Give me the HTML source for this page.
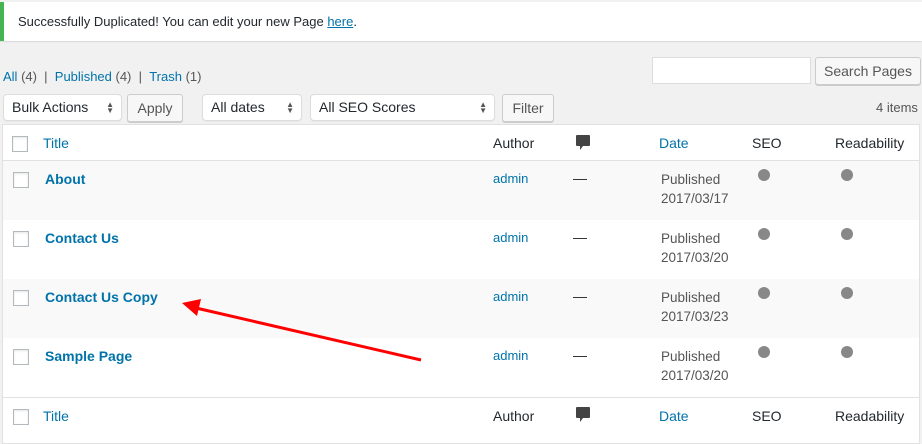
<!DOCTYPE html>
<html><head><meta charset="utf-8"><style>
*{box-sizing:border-box;margin:0;padding:0}
body{width:922px;height:432px;overflow:hidden;background:#f1f1f1;font-family:"Liberation Sans",Arial,sans-serif;font-size:14px;color:#23282d;position:relative}
.a{position:absolute;white-space:nowrap}
a,.l{color:#0073aa;text-decoration:none}
.notice{position:absolute;left:0;top:2px;width:922px;height:39px;background:#fff;border-left:4px solid #46b450;box-shadow:0 1px 1px rgba(0,0,0,.1)}
.sel{position:absolute;height:27px;background:#fff;border:1px solid #ddd;border-radius:4px;padding:4px 0 0 8px;font-size:14px;box-shadow:0 1px 1px rgba(0,0,0,.04)}
.btn{position:absolute;height:28px;background:#f7f7f7;border:1px solid #ccc;border-radius:3px;box-shadow:0 1px 0 #ccc;padding:5px 0 0;text-align:center;color:#555;font-size:14px}
.arr{position:absolute;right:7px;top:7px;font-size:8px;line-height:6px;color:#555}
.tbl{position:absolute;left:2px;top:124px;width:918px;height:320px;background:#fff;border:1px solid #e1e1e1}
.row{position:absolute;left:0;width:916px;height:59px}
.cb{position:absolute;width:16px;height:16px;border:1px solid #b4b9be;background:#fff;box-shadow:inset 0 1px 2px rgba(0,0,0,.1)}
.dot{position:absolute;width:12px;height:12px;border-radius:50%;background:#888}
.pub{font-size:13.5px;line-height:19px;color:#555}
b{font-weight:bold}
</style></head><body>
<div class="notice"></div>
<div class="a" style="left:18px;top:14px;font-size:13px">Successfully Duplicated! You can edit your new Page <a style="text-decoration:underline" href="#">here</a>.</div>

<div class="a" style="left:3px;top:69px;font-size:13px;color:#555"><span class="l">All</span> (4) &nbsp;| &nbsp;<span class="l">Published</span> (4) &nbsp;| &nbsp;<span class="l">Trash</span> (1)</div>

<div class="a" style="left:652px;top:57px;width:159px;height:27px;background:#fff;border:1px solid #ddd"></div>
<div class="btn" style="left:815px;top:57px;width:106px;padding-top:5px">Search Pages</div>

<div class="sel" style="left:3px;top:94px;width:119px">Bulk Actions<span class="arr">▲<br>▼</span></div>
<div class="btn" style="left:127px;top:94px;width:56px">Apply</div>
<div class="sel" style="left:202px;top:94px;width:100px">All dates<span class="arr">▲<br>▼</span></div>
<div class="sel" style="left:310px;top:94px;width:185px">All SEO Scores<span class="arr">▲<br>▼</span></div>
<div class="btn" style="left:502px;top:94px;width:52px">Filter</div>
<div class="a" style="left:876px;top:100px;font-size:13px;color:#555">4 items</div>

<div class="tbl">
 <div class="row" style="top:0;height:36px;border-bottom:1px solid #e1e1e1"></div>
 <div class="row" style="top:36px;background:#f9f9f9"></div>
 <div class="row" style="top:95px"></div>
 <div class="row" style="top:154px;background:#f9f9f9"></div>
 <div class="row" style="top:213px;border-bottom:1px solid #e1e1e1;height:60px"></div>
</div>

<!-- header -->
<div class="cb" style="left:12px;top:136px"></div>
<div class="a l" style="left:43px;top:135px">Title</div>
<div class="a" style="left:493px;top:135px">Author</div>
<svg class="a" style="left:576px;top:135px" width="14" height="16" viewBox="0 0 14 16"><path d="M1 0h12a1 1 0 0 1 1 1v9a1 1 0 0 1-1 1H7l-3 4v-4H1a1 1 0 0 1-1-1V1a1 1 0 0 1 1-1z" fill="#444"/></svg>
<div class="a l" style="left:659px;top:135px">Date</div>
<div class="a" style="left:752px;top:135px">SEO</div>
<div class="a" style="left:835px;top:135px">Readability</div>

<!-- rows -->
<div class="cb" style="left:13px;top:172px"></div>
<div class="a l" style="left:45px;top:171px"><b>About</b></div>
<div class="a l" style="left:493px;top:171px;font-size:13px">admin</div>
<div class="a" style="left:573px;top:170px">—</div>
<div class="a pub" style="left:661px;top:170px">Published<br>2017/03/17</div>
<div class="dot" style="left:758px;top:169px"></div><div class="dot" style="left:841px;top:169px"></div>

<div class="cb" style="left:13px;top:231px"></div>
<div class="a l" style="left:45px;top:230px"><b>Contact Us</b></div>
<div class="a l" style="left:493px;top:230px;font-size:13px">admin</div>
<div class="a" style="left:573px;top:229px">—</div>
<div class="a pub" style="left:661px;top:229px">Published<br>2017/03/20</div>
<div class="dot" style="left:758px;top:228px"></div><div class="dot" style="left:841px;top:228px"></div>

<div class="cb" style="left:13px;top:290px"></div>
<div class="a l" style="left:45px;top:289px"><b>Contact Us Copy</b></div>
<div class="a l" style="left:493px;top:289px;font-size:13px">admin</div>
<div class="a" style="left:573px;top:288px">—</div>
<div class="a pub" style="left:661px;top:288px">Published<br>2017/03/23</div>
<div class="dot" style="left:758px;top:287px"></div><div class="dot" style="left:841px;top:287px"></div>

<div class="cb" style="left:13px;top:349px"></div>
<div class="a l" style="left:45px;top:348px"><b>Sample Page</b></div>
<div class="a l" style="left:493px;top:348px;font-size:13px">admin</div>
<div class="a" style="left:573px;top:347px">—</div>
<div class="a pub" style="left:661px;top:347px">Published<br>2017/03/20</div>
<div class="dot" style="left:758px;top:346px"></div><div class="dot" style="left:841px;top:346px"></div>

<!-- footer -->
<div class="cb" style="left:13px;top:409px"></div>
<div class="a l" style="left:43px;top:408px">Title</div>
<div class="a" style="left:493px;top:408px">Author</div>
<svg class="a" style="left:576px;top:407px" width="14" height="16" viewBox="0 0 14 16"><path d="M1 0h12a1 1 0 0 1 1 1v9a1 1 0 0 1-1 1H7l-3 4v-4H1a1 1 0 0 1-1-1V1a1 1 0 0 1 1-1z" fill="#444"/></svg>
<div class="a l" style="left:659px;top:408px">Date</div>
<div class="a" style="left:752px;top:408px">SEO</div>
<div class="a" style="left:835px;top:408px">Readability</div>

<svg class="a" style="left:0;top:0" width="922" height="432"><line x1="421" y1="360" x2="196" y2="308" stroke="#f00" stroke-width="3"/><polygon points="182,303 201,299 197,316" fill="#f00"/></svg>
</body></html>
